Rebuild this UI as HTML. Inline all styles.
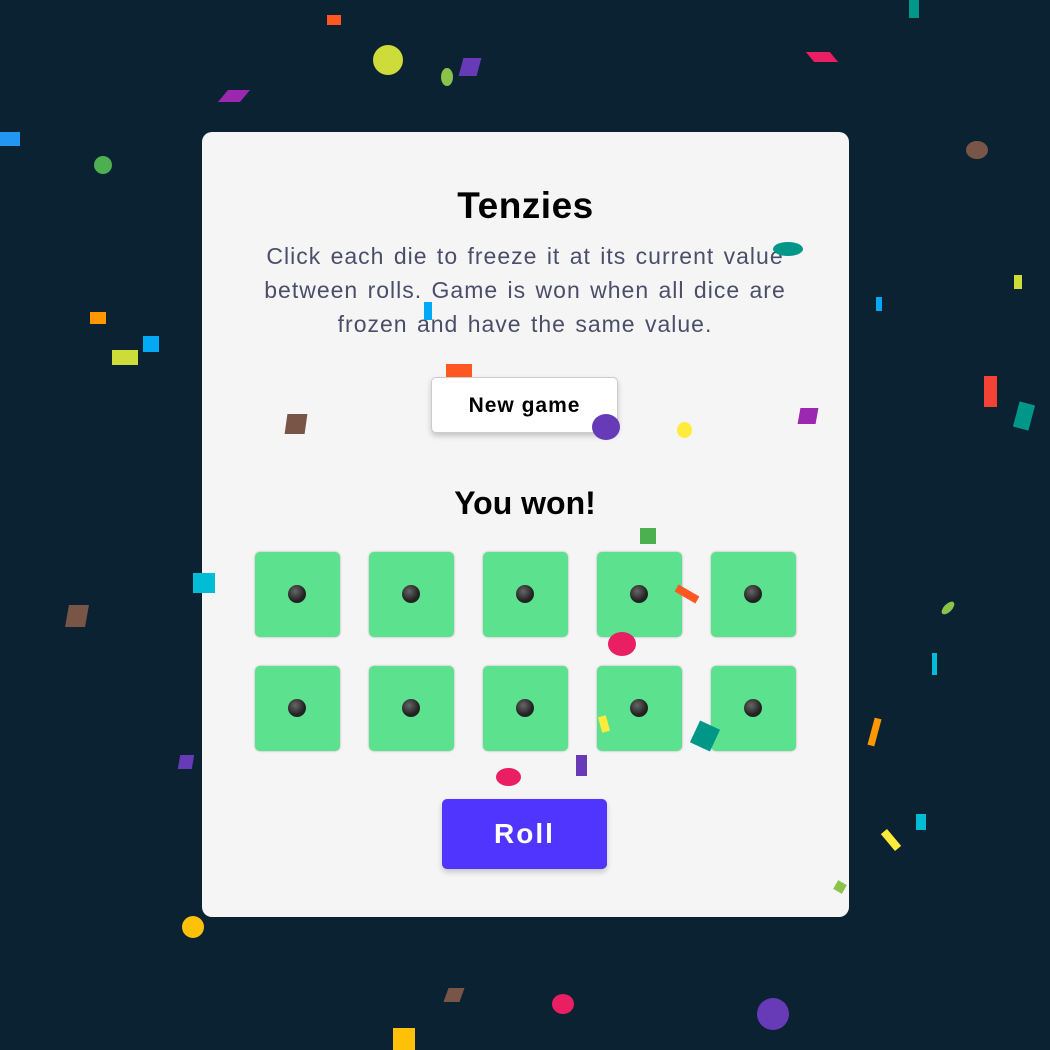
<!DOCTYPE html>
<html><head><meta charset="utf-8"><style>
html,body{margin:0;padding:0;width:1050px;height:1050px;overflow:hidden;background:#0b2233;font-family:"Liberation Sans",sans-serif}
.card{position:absolute;left:202px;top:132px;width:647px;height:785px;background:#f5f5f5;border-radius:10px}
h1{position:absolute;left:202px;width:647px;top:185px;margin:0;text-align:center;font-size:37px;font-weight:bold;color:#000;letter-spacing:0.5px}
.desc{position:absolute;left:150px;width:750px;top:239px;text-align:center;font-size:23px;line-height:34px;color:#4a4e69;letter-spacing:1px;word-spacing:2px}
.ng{position:absolute;left:431px;top:377px;width:187px;height:56px;background:#fff;border:1px solid #ccc;border-radius:5px;box-shadow:0 3px 6px rgba(0,0,0,.2);box-sizing:border-box;text-align:center;line-height:56px;font-size:21px;font-weight:bold;letter-spacing:1px}
.won{position:absolute;left:0;width:1050px;top:485px;text-align:center;font-size:32px;font-weight:bold}
.d{position:absolute;width:85px;height:85px;background:#5ce28e;border-radius:5px;box-shadow:0 0 2px rgba(0,0,0,.3)}
.d::after{content:"";position:absolute;left:33px;top:33px;width:18px;height:18px;border-radius:50%;background:radial-gradient(circle at 40% 35%,#666,#222 60%)}
.roll{position:absolute;left:442px;top:799px;width:165px;height:70px;background:#5035ff;border-radius:5px;color:#fff;text-align:center;line-height:70px;font-size:28px;font-weight:bold;letter-spacing:2px;box-shadow:0 3px 6px rgba(0,0,0,.2)}
.c{position:absolute}
</style></head><body>
<div class="card"></div>
<h1>Tenzies</h1>
<div class="desc">Click each die to freeze it at its current value<br>between rolls. Game is won when all dice are<br>frozen and have the same value.</div>
<div class="ng">New game</div>
<div class="won">You won!</div>
<div class="d" style="left:255px;top:552px"></div>
<div class="d" style="left:369px;top:552px"></div>
<div class="d" style="left:483px;top:552px"></div>
<div class="d" style="left:597px;top:552px"></div>
<div class="d" style="left:711px;top:552px"></div>
<div class="d" style="left:255px;top:666px"></div>
<div class="d" style="left:369px;top:666px"></div>
<div class="d" style="left:483px;top:666px"></div>
<div class="d" style="left:597px;top:666px"></div>
<div class="d" style="left:711px;top:666px"></div>
<div class="roll">Roll</div>
<div class="c" style="left:373px;top:45px;width:30px;height:30px;border-radius:50%;background:#cddc39"></div>
<div class="c" style="left:94px;top:156px;width:18px;height:18px;border-radius:50%;background:#4caf50"></div>
<div class="c" style="left:0;top:132px;width:20px;height:14px;background:#2196f3"></div>
<div class="c" style="left:223px;top:90px;width:22px;height:12px;background:#9c27b0;transform:skewX(-40deg)"></div>
<div class="c" style="left:966px;top:141px;width:22px;height:18px;border-radius:50%;background:#795548"></div>
<div class="c" style="left:773px;top:242px;width:30px;height:14px;border-radius:50%;background:#009688"></div>
<div class="c" style="left:112px;top:350px;width:26px;height:15px;background:#cddc39"></div>
<div class="c" style="left:143px;top:336px;width:16px;height:16px;background:#03a9f4"></div>
<div class="c" style="left:90px;top:312px;width:16px;height:12px;background:#ff9800"></div>
<div class="c" style="left:286px;top:414px;width:20px;height:20px;background:#795548;transform:skewX(-8deg)"></div>
<div class="c" style="left:592px;top:414px;width:28px;height:26px;border-radius:50%;background:#673ab7"></div>
<div class="c" style="left:446px;top:364px;width:26px;height:13px;background:#ff5722"></div>
<div class="c" style="left:677px;top:422px;width:15px;height:16px;border-radius:50%;background:#ffeb3b"></div>
<div class="c" style="left:799px;top:408px;width:18px;height:16px;background:#9c27b0;transform:skewX(-10deg)"></div>
<div class="c" style="left:984px;top:376px;width:13px;height:31px;background:#f44336"></div>
<div class="c" style="left:1016px;top:403px;width:16px;height:26px;background:#009688;transform:rotate(15deg)"></div>
<div class="c" style="left:193px;top:573px;width:22px;height:20px;background:#00bcd4"></div>
<div class="c" style="left:67px;top:605px;width:20px;height:22px;background:#795548;transform:skewX(-10deg)"></div>
<div class="c" style="left:608px;top:632px;width:28px;height:24px;border-radius:50%;background:#e91e63"></div>
<div class="c" style="left:694px;top:724px;width:22px;height:24px;background:#009688;transform:rotate(25deg)"></div>
<div class="c" style="left:496px;top:768px;width:25px;height:18px;border-radius:50%;background:#e91e63"></div>
<div class="c" style="left:576px;top:755px;width:11px;height:21px;background:#673ab7"></div>
<div class="c" style="left:640px;top:528px;width:16px;height:16px;background:#4caf50"></div>
<div class="c" style="left:182px;top:916px;width:22px;height:22px;border-radius:50%;background:#ffc107"></div>
<div class="c" style="left:757px;top:998px;width:32px;height:32px;border-radius:50%;background:#673ab7"></div>
<div class="c" style="left:552px;top:994px;width:22px;height:20px;border-radius:50%;background:#e91e63"></div>
<div class="c" style="left:393px;top:1028px;width:22px;height:22px;background:#ffc107"></div>
<div class="c" style="left:446px;top:988px;width:16px;height:14px;background:#795548;transform:skewX(-20deg)"></div>
<div class="c" style="left:871px;top:718px;width:7px;height:28px;background:#ff9800;transform:rotate(15deg)"></div>
<div class="c" style="left:179px;top:755px;width:14px;height:14px;background:#673ab7;transform:skewX(-10deg)"></div>
<div class="c" style="left:880px;top:836px;width:22px;height:8px;background:#ffeb3b;transform:rotate(50deg)"></div>
<div class="c" style="left:916px;top:814px;width:10px;height:16px;background:#00bcd4"></div>
<div class="c" style="left:675px;top:590px;width:24px;height:8px;background:#ff5722;transform:rotate(30deg)"></div>
<div class="c" style="left:909px;top:0;width:10px;height:18px;background:#009688"></div>
<div class="c" style="left:810px;top:52px;width:24px;height:10px;background:#e91e63;transform:skewX(40deg)"></div>
<div class="c" style="left:441px;top:68px;width:12px;height:18px;border-radius:50%;background:#8bc34a"></div>
<div class="c" style="left:461px;top:58px;width:18px;height:18px;background:#673ab7;transform:skewX(-15deg)"></div>
<div class="c" style="left:327px;top:15px;width:14px;height:10px;background:#ff5722"></div>
<div class="c" style="left:940px;top:604px;width:16px;height:8px;border-radius:50%;background:#8bc34a;transform:rotate(-45deg)"></div>
<div class="c" style="left:932px;top:653px;width:5px;height:22px;background:#00bcd4"></div>
<div class="c" style="left:876px;top:297px;width:6px;height:14px;background:#03a9f4"></div>
<div class="c" style="left:1014px;top:275px;width:8px;height:14px;background:#cddc39"></div>
<div class="c" style="left:424px;top:302px;width:8px;height:18px;background:#03a9f4"></div>
<div class="c" style="left:600px;top:716px;width:8px;height:16px;background:#ffeb3b;transform:rotate(-15deg)"></div>
<div class="c" style="left:835px;top:882px;width:10px;height:10px;background:#8bc34a;transform:rotate(30deg)"></div>
</body></html>
